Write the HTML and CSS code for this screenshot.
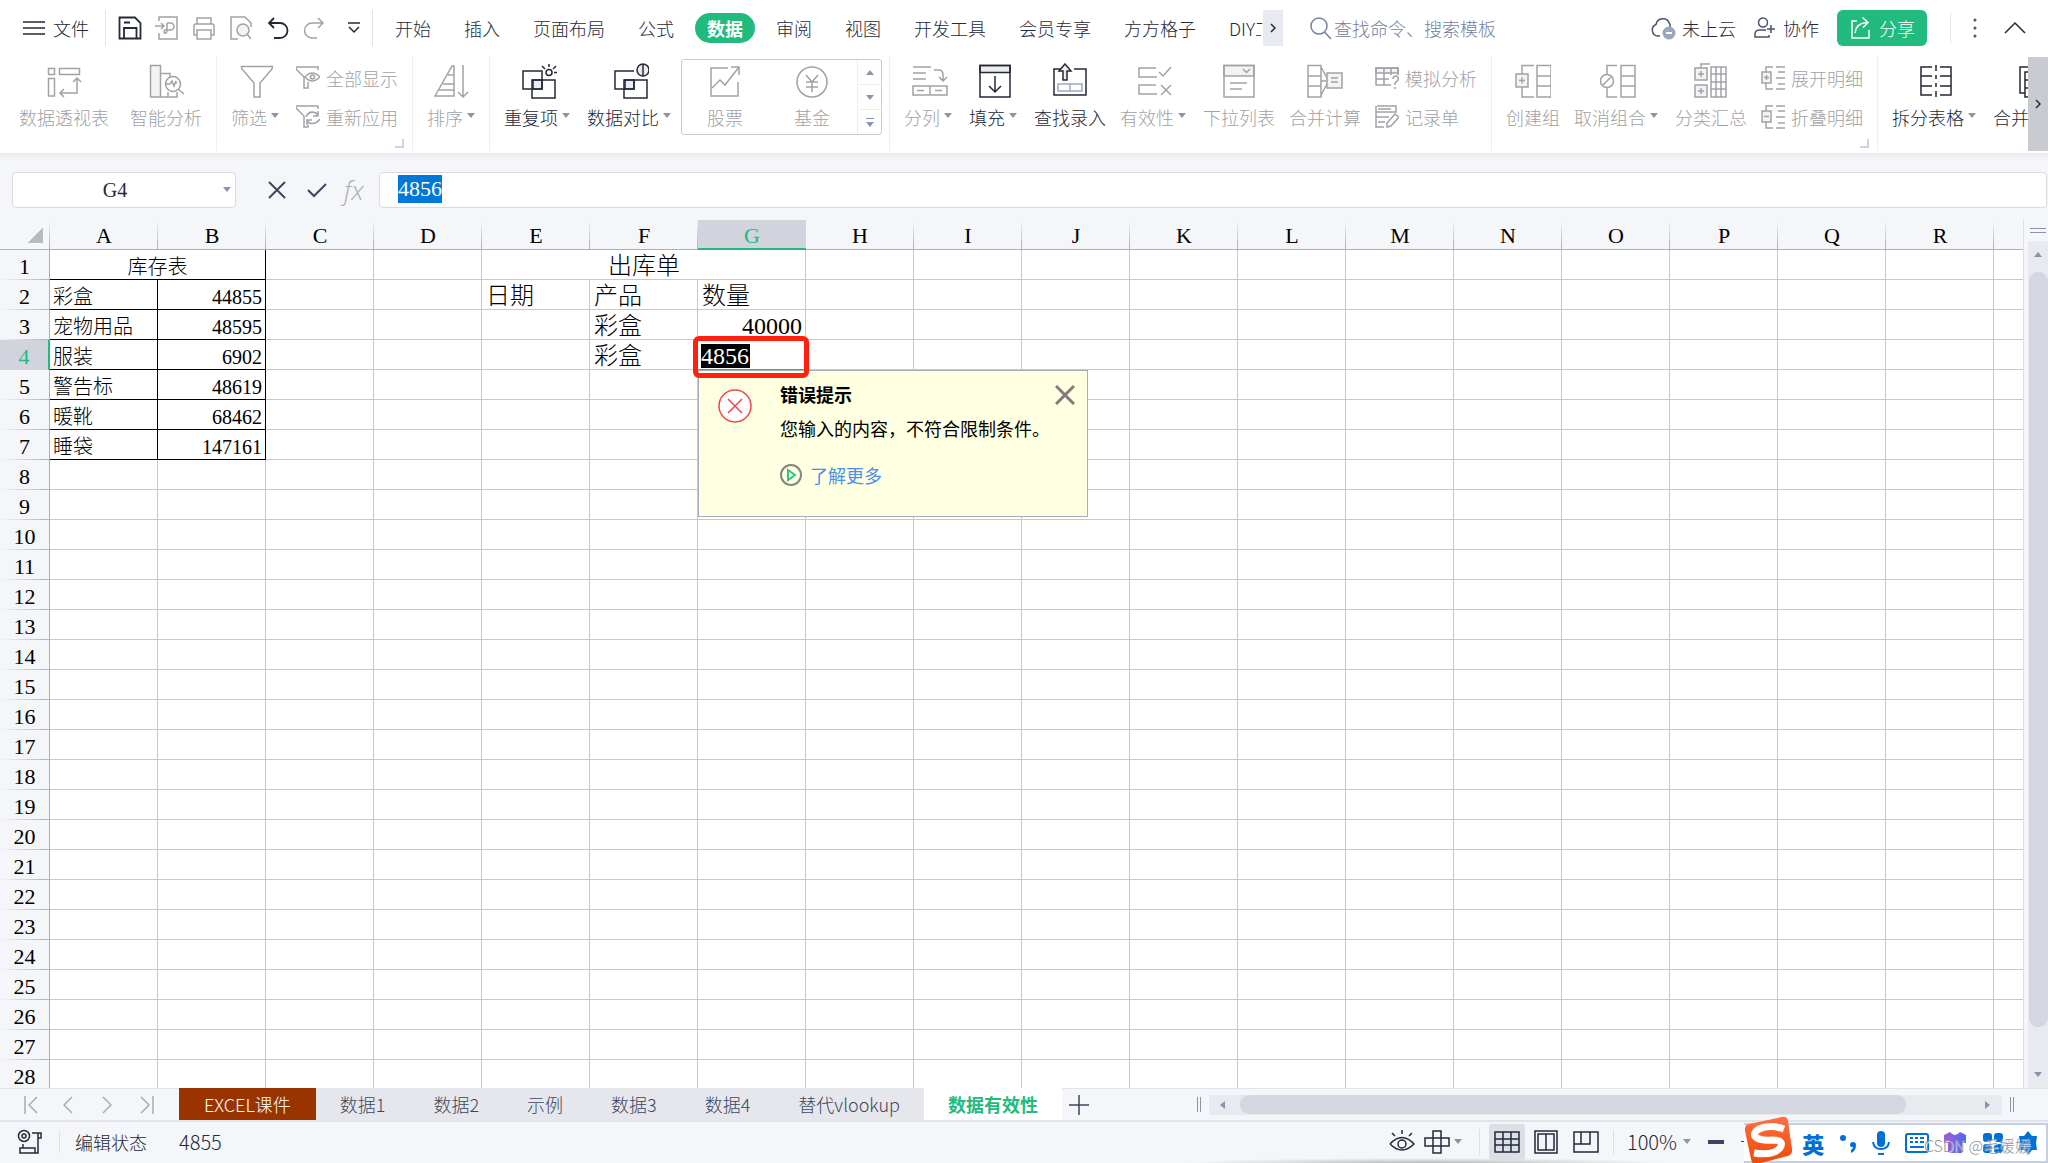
FILE: index.html
```html
<!DOCTYPE html>
<html lang="zh-CN">
<head>
<meta charset="utf-8">
<title>数据有效性</title>
<link rel="stylesheet" href="styles.css">
</head>
<body>
<header class="menubar">
  <button class="file-btn"><svg width="22" height="16" viewBox="0 0 22 16"><path d="M0 2H22M0 8H22M0 14H22"/></svg>文件</button>
  <div class="quick">
    <button aria-label="保存"><svg width="24" height="24" viewBox="0 0 24 24"><path class="heavy" d="M1.500 1.500H17L22.500 7V22.500H1.500ZM6 22V12H18.500V22M6 6.500H12"/></svg></button>
    <button aria-label="输出为PDF" class="off"><svg width="24" height="24" viewBox="0 0 24 24"><path d="M4 5V1H22V23H4V17M0 10H9M6 7L9 10L6 13M12 7H15.500A3.500 3.500 0 0 1 15.500 14H12V7M12 14C12 18 9 18 9 15.500C9 13.500 12 13.500 14 14"/></svg></button>
    <button aria-label="打印" class="off"><svg width="24" height="24" viewBox="0 0 24 24"><path d="M5 8V2H19V8M5 19H2V10Q2 8 4 8H20Q22 8 22 10V19H19M5 14H19V23H5Z"/></svg></button>
    <button aria-label="打印预览" class="off"><svg width="24" height="24" viewBox="0 0 24 24"><path d="M9 23H2V1H16L22 7V11M18 18L22 23"/><circle class="tint" cx="14" cy="14" r="6"/></svg></button>
    <button aria-label="撤销"><svg width="24" height="24" viewBox="0 0 24 24"><path class="heavy" d="M8 2L3 7L8 12M3 7H14A7.500 7.500 0 0 1 14 22H8"/></svg></button>
    <button aria-label="恢复" class="off"><svg width="24" height="24" viewBox="0 0 24 24"><path d="M15 2L20 7L15 12M20 7H9A7.500 7.500 0 0 0 9 22H14"/></svg></button>
    <button aria-label="自定义快速访问" class="narrow"><svg width="12" height="14" viewBox="0 0 12 14"><path d="M0 2H12M1 6L6 11L11 6"/></svg></button>
  </div>
  <nav class="tabs">
    <button>开始</button><button>插入</button><button>页面布局</button><button>公式</button><button class="on">数据</button><button>审阅</button><button>视图</button><button>开发工具</button><button>会员专享</button><button>方方格子</button><button class="cut">DIY工具箱</button>
  </nav>
  <button class="tab-more" aria-label="更多选项卡"><svg width="6" height="10" viewBox="0 0 6 10"><path d="M1 1L5 5L1 9"/></svg></button>
  <label class="search"><svg width="22" height="24" viewBox="0 0 22 24"><circle cx="9" cy="10" r="8"/><path d="M14.500 16L21 23"/></svg><input type="text" placeholder="查找命令、搜索模板"></label>
  <div class="account">
    <button><svg width="26" height="24" viewBox="0 0 26 24"><path d="M9 20H7A6 6 0 0 1 5 8.500A7 7 0 0 1 18.500 7.500Q19.500 9 19 11"/><circle class="badge" cx="18" cy="17" r="6.500"/><path class="white" d="M15 17H21"/></svg>未上云</button>
    <button class="collab"><svg width="22" height="22" viewBox="0 0 22 22"><circle cx="9" cy="5.500" r="4.500"/><path d="M12 13H6Q1 13 1 17V20H15V18M17 8V16M13 12H21"/></svg>协作</button>
    <button class="share"><svg width="24" height="24" viewBox="0 0 24 24"><path d="M8 5H3V22H20V14M6 17Q7 7 18 6.500M13.500 1.500L19 6.500L14 11.500"/></svg>分享</button>
  </div>
  <div class="window-tools">
    <button aria-label="更多"><svg width="4" height="20" viewBox="0 0 4 20"><g class="dots"><circle cx="2" cy="2" r="1.500"/><circle cx="2" cy="10" r="1.500"/><circle cx="2" cy="18" r="1.500"/></g></svg></button>
    <button aria-label="收起功能区"><svg width="22" height="14" viewBox="0 0 22 14"><path d="M1 12L11 2L21 12"/></svg></button>
  </div>
</header>

<section class="ribbon">
  <div class="group first">
    <button class="big off"><svg viewBox="0 0 36 36"><path d="M2.500 5.500H8.500V11.500H2.500ZM13.500 5.500H33.500V11.500H13.500ZM2.500 15.500H8.500V33H2.500ZM14 30H31V15M18 26L14 30L18 34M27 19L31 15L35 19"/></svg><span>数据透视表</span></button>
    <button class="big off"><svg viewBox="0 0 36 36"><path class="tint" d="M2.500 2.500H12.500V34H2.500Z"/><path d="M12.500 10.500H22V15M12.500 34H29V29M20 34V29M30 26L36 31M18 21H22L24 18L26 23L28 18V21"/><circle cx="25" cy="21" r="7.500"/></svg><span>智能分析</span></button>
  </div>
  <div class="group launch">
    <button class="big off"><svg viewBox="0 0 36 36"><path d="M2.500 3.500H33.500L33 6L21 20V34H15V20L3 6Z"/></svg><span>筛选<i class="caret"></i></span></button>
    <div class="stack">
      <button class="small off"><svg viewBox="0 0 24 24"><path d="M22 4V1H0V3L8 11V22H12V16M9 11Q16 3 24 11Q16 19 9 11"/><circle cx="16.500" cy="11" r="2"/></svg>全部显示</button>
      <button class="small off"><svg viewBox="0 0 24 24"><path d="M22 4V1H0V3L8 11V22H12V20M10 12Q13 5 20 8L22 11M22 6V11H17M24 14Q20 20 13 18L11 15M11 20V15H16"/></svg>重新应用</button>
    </div>
  </div>
  <div class="group">
    <button class="big off"><svg viewBox="0 0 36 36"><path d="M2 33L19 3H21V33ZM15 12H21M10 21H21M6 27H21M30 2V34M25 29L30 34L35 29"/></svg><span>排序<i class="caret"></i></span></button>
  </div>
  <div class="group">
    <button class="big"><svg viewBox="0 0 36 36"><path class="tint" d="M12 17H21V26H12Z"/><path d="M2 8H21V26H2ZM11 17H34V35H11Z"/><circle cx="28" cy="9.500" r="3"/><path d="M28 1V4M21 3L24 6M35 3L32 6M33 9.500H36"/></svg><span>重复项<i class="caret"></i></span></button>
    <button class="big"><svg viewBox="0 0 36 36"><path class="tint" d="M12 17H21V26H12Z"/><path d="M21 8H2V26H21V17M11 17H34V35H11Z"/><circle class="tint" cx="30" cy="7" r="6"/><path d="M30 1V13"/></svg><span>数据对比<i class="caret"></i></span></button>
    <div class="gallery">
      <button class="big off"><svg viewBox="0 0 36 36"><path d="M21 5H4V33H31V19M5 25L13 17L18 22L32 4M24 4H32V12"/></svg><span>股票</span></button>
      <button class="big off"><svg viewBox="0 0 36 36"><circle cx="18" cy="19" r="15"/><path d="M12 12L18 19L24 12M18 19V29M12 19H24M12 24H24"/></svg><span>基金</span></button>
      <div class="gallery-nav">
        <button aria-label="上一行"><i class="up"></i></button><button aria-label="下一行"><i class="caret"></i></button><button aria-label="展开" class="all"><i class="caret"></i></button>
      </div>
    </div>
  </div>
  <div class="group">
    <button class="big off"><svg viewBox="0 0 36 36"><path d="M1 4H19M1 10H14M1 16H14M22 7H27Q31 7 31 12V18M27 14L31 18L35 14M1 23H35V32H1ZM18 23V32M5 27.500H12M23 27.500H30"/></svg><span>分列<i class="caret"></i></span></button>
    <button class="big"><svg viewBox="0 0 36 36"><path class="tint" d="M3 2.500H33V9.500H3Z"/><path d="M3 2.500H33V34H3ZM18 13V29M12 23L18 29L24 23"/></svg><span>填充<i class="caret"></i></span></button>
    <button class="big"><svg viewBox="0 0 36 36"><path d="M10 6H2V32H34V6H22"/><path class="tint" d="M11 17V8H7L13 1L19 8H15V17Z"/><path class="pale" d="M6 21H30V28H6ZM18 21V28"/></svg><span>查找录入</span></button>
    <button class="big off"><svg viewBox="0 0 36 36"><path d="M19 5H2V14H20M19 22H2V31H20M22 9L26 13L34 4M24 22L34 32M34 22L24 32"/></svg><span>有效性<i class="caret"></i></span></button>
    <button class="big off"><svg viewBox="0 0 36 36"><path class="tint" d="M3 2.500H33V13H3Z"/><path d="M3 2.500H33V34H3ZM22 6L25.500 9.500L29 6M9 20H26M9 26H21"/></svg><span>下拉列表</span></button>
    <button class="big off"><svg viewBox="0 0 36 36"><path d="M1 2.500H14V34H1ZM1 13H14M1 23H14M14 4L20 15M14 18H20M14 32L20 21"/><path class="tint" d="M20 10H35V25H20Z"/><path d="M24 15H31M24 19H31"/></svg><span>合并计算</span></button>
    <div class="stack">
      <button class="small off"><svg viewBox="0 0 24 24"><path class="tint" d="M1 2H23V7H1Z"/><path d="M16 19H1V2H23V9M9 2V19M16 2V9M1 13H14M18 13Q18 10 21 10Q24 10 23 14L20 17V19M20 21V23"/></svg>模拟分析</button>
      <button class="small off"><svg viewBox="0 0 24 24"><path d="M2 1H21V7H1M1 1V12H14M3 4H16M1 12V22H9M3 17H10M12 22V18L20 9L24 12L16 21Z"/></svg>记录单</button>
    </div>
  </div>
  <div class="group launch">
    <button class="big off"><svg viewBox="0 0 36 36"><path d="M19 2.500H7V11M7 24V34H19M22 2.500H36V34H22ZM22 13H36M22 23H36"/><path class="tint" d="M1 11H13V24H1Z"/><path d="M4 17.500H10M7 14.500V20.500"/></svg><span>创建组</span></button>
    <button class="big off"><svg viewBox="0 0 36 36"><path d="M17 2.500H7V11M7 24V34H17M21 2.500H35V34H21ZM21 13H35M21 23H35M3 22L11 14"/><circle cx="7" cy="18" r="6.500"/></svg><span>取消组合<i class="caret"></i></span></button>
    <button class="big off"><svg viewBox="0 0 36 36"><path class="tint" d="M2 5H14V17H2ZM2 22H14V34H2Z"/><path d="M8 5V1H17M18 4H33V34H18ZM18 11H33M18 19H33M18 26H33M23 4V34M28 4V34M5 11H11M8 8V14M5 28H11M8 25V31"/></svg><span>分类汇总</span></button>
    <div class="stack">
      <button class="small off"><svg viewBox="0 0 24 24"><path class="tint" d="M1 6H10V17H1Z"/><path d="M12 1H5V6M5 17V23H12M3 11.500H8M5.500 9V14M15 1H24M17 6H24M15 12H24M17 18H24M15 23H24"/></svg>展开明细</button>
      <button class="small off"><svg viewBox="0 0 24 24"><path class="tint" d="M1 6H10V17H1Z"/><path d="M12 1H5V6M5 17V23H12M3 11.500H8M15 1H24M17 6H24M15 12H24M17 18H24M15 23H24"/></svg>折叠明细</button>
    </div>
  </div>
  <div class="group last">
    <button class="big"><svg viewBox="0 0 36 36"><path d="M14 4H3V32H14M3 13H14M3 23H14M22 4H33V32H22M33 13H22M33 23H22M18 2V8M18 12V16M18 20V24M18 28V34"/></svg><span>拆分表格<i class="caret"></i></span></button>
    <button class="big"><svg viewBox="0 0 36 36"><path d="M14 4H3V30H8M8 9H30V34H8ZM14 4V9M8 17H30M8 25H30"/></svg><span>合并表格<i class="caret"></i></span></button>
  </div>
  <button class="ribbon-more" aria-label="向右滚动"><svg width="6" height="10" viewBox="0 0 6 10"><path d="M1 1L5 5L1 9"/></svg></button>
</section>

<section class="formula">
  <div class="namebox"><input type="text" aria-label="名称框" value="G4"><i class="caret"></i></div>
  <div class="formula-tools">
    <button aria-label="取消"><svg width="18" height="18" viewBox="0 0 18 18"><path d="M1 1L17 17M17 1L1 17"/></svg></button>
    <button aria-label="确认"><svg width="20" height="16" viewBox="0 0 20 16"><path d="M1 8L7 14L19 2"/></svg></button>
    <button aria-label="插入函数" class="fx">fx</button>
  </div>
  <div class="editline" role="textbox" aria-label="编辑栏"><mark>4856</mark></div>
</section>

<main class="sheet">
  <div class="grid">
    <table>
      <thead><tr id="columns"><th class="corner"></th></tr></thead>
      <tbody id="rows"></tbody>
    </table>
  </div>
  <div class="vscroll">
    <div class="split"></div>
    <div class="track"><i class="up"></i><div class="thumb"></div><i class="caret"></i></div>
  </div>
</main>

<template id="editor">
  <span class="editing">4856</span>
  <div class="ring"></div>
  <div class="tip" role="alert">
    <svg width="34" height="34" viewBox="0 0 34 34"><circle cx="17" cy="17" r="16"/><path d="M10 10L24 24M24 10L10 24"/></svg>
    <div class="tip-body">
      <strong>错误提示</strong>
      <p>您输入的内容，不符合限制条件。</p>
      <a href="#"><svg width="22" height="22" viewBox="0 0 22 22"><circle cx="11" cy="11" r="10"/><path d="M8 6L15 11L8 16Z"/></svg>了解更多</a>
    </div>
    <button aria-label="关闭"><svg width="20" height="20" viewBox="0 0 20 20"><path d="M1 1L19 19M19 1L1 19"/></svg></button>
  </div>
</template>

<footer>
  <div class="sheetbar">
    <div class="sheet-nav">
      <button aria-label="第一个"><svg width="14" height="18" viewBox="0 0 14 18"><path d="M1 0V18M13 1L5 9L13 17"/></svg></button>
      <button aria-label="上一个"><svg width="10" height="18" viewBox="0 0 10 18"><path d="M9 1L1 9L9 17"/></svg></button>
      <button aria-label="下一个"><svg width="10" height="18" viewBox="0 0 10 18"><path d="M1 1L9 9L1 17"/></svg></button>
      <button aria-label="最后一个"><svg width="14" height="18" viewBox="0 0 14 18"><path d="M1 1L9 9L1 17M13 0V18"/></svg></button>
    </div>
    <div class="sheets">
      <button class="brown">EXCEL课件</button><button>数据1</button><button>数据2</button><button>示例</button><button>数据3</button><button>数据4</button><button>替代vlookup</button><button class="on">数据有效性</button>
    </div>
    <button class="add" aria-label="新建工作表"><svg width="20" height="20" viewBox="0 0 20 20"><path d="M0 10H20M10 0V20"/></svg></button>
    <div class="hscroll">
      <span class="grip"></span>
      <div class="track"><i class="left"></i><div class="thumb"></div><i class="right"></i></div>
      <span class="grip"></span>
    </div>
  </div>
  <div class="status">
    <button class="macro" aria-label="录制宏"><svg width="26" height="26" viewBox="0 0 26 26"><circle cx="7" cy="7" r="5.500"/><circle cx="7" cy="7" r="2"/><path d="M15 4H24V9H21V24H3V19H18V24M6 15V19M21 4V9"/></svg></button>
    <span class="mode">编辑状态</span><span class="value">4855</span>
    <div class="views">
      <button aria-label="护眼模式"><svg width="26" height="24" viewBox="0 0 26 24"><path d="M1 14Q13 1 25 14Q13 26 1 14M13 0V4M3 3L6 6M23 3L20 6"/><circle cx="13" cy="14" r="4"/></svg></button>
      <button class="cross" aria-label="阅读模式"><svg width="26" height="26" viewBox="0 0 26 26"><path d="M9 2H17V24H9ZM1 9H25V17H1Z"/></svg><i class="caret"></i></button>
      <button class="active" aria-label="普通视图"><svg width="26" height="22" viewBox="0 0 26 22"><path d="M1 1H25V21H1ZM1 8H25M1 14H25M9 1V21M17 1V21"/></svg></button>
      <button aria-label="页面布局"><svg width="24" height="24" viewBox="0 0 24 24"><path d="M1 1H23V23H1ZM4 4H20V20H4ZM12 4V20"/></svg></button>
      <button class="paged" aria-label="分页预览"><svg width="26" height="22" viewBox="0 0 26 22"><path d="M1 1H25V21H1ZM17 1V13H8V1M1 13H8"/></svg></button>
      <button class="zoom">100%<i class="caret"></i></button>
      <button aria-label="缩小"><svg width="16" height="4" viewBox="0 0 16 4"><path class="minus" d="M0 2H16"/></svg></button>
      <span class="slider"></span>
    </div>
    <div class="ime">
      <svg class="sogou" width="50" height="48" viewBox="0 0 50 48"><defs><linearGradient id="so" x1="0" y1="0" x2="0" y2="1"><stop offset="0" stop-color="#ff7040"/><stop offset="1" stop-color="#f04808"/></linearGradient></defs><path fill="url(#so)" d="M5 8L38 1Q43 0 44 5L48 33Q49 38 44 40L13 48Q8 49 7 43L1 15Q0 9 5 8Z"/><path fill="none" stroke="#fff" stroke-width="7" d="M40 13Q26 8 15 13Q7 18 13 22Q18 25 28 24Q41 24 36 32Q29 40 10 37"/></svg>
      <b>英</b>
      <svg width="18" height="22" viewBox="0 0 18 22"><circle cx="4" cy="6" r="3"/><path d="M11 13A3 3 0 1 1 17 13Q17 19 12 21V18Q14 17 14 15Q11 15 11 13"/></svg>
      <svg width="20" height="26" viewBox="0 0 20 26"><rect x="6" y="1" width="8" height="16" rx="4"/><path d="M1 12H3Q4 18 10 18Q16 18 17 12H19Q18 20 10 20Q2 20 1 12M7 23H13V25H7Z"/></svg>
      <svg width="24" height="20" viewBox="0 0 24 20"><path class="line" d="M3 1H21Q23 1 23 3V17Q23 19 21 19H3Q1 19 1 17V3Q1 1 3 1ZM5 5H8M10 5H13M15 5H19M5 9H8M10 9H13M15 9H19M5 14H19"/></svg>
      <svg width="24" height="24" viewBox="0 0 24 24"><defs><linearGradient id="shirt"><stop offset="0" stop-color="#a45cd8"/><stop offset="1" stop-color="#4a68f5"/></linearGradient></defs><path fill="url(#shirt)" d="M7 1Q12 7 17 1L23 4V12H19V22H5V12H1V4Z"/></svg>
      <svg width="22" height="22" viewBox="0 0 22 22"><rect x="1" y="1" width="9" height="9" rx="3"/><rect x="12" y="1" width="9" height="9" rx="3"/><rect x="1" y="12" width="9" height="9" rx="3"/><rect x="12" y="12" width="9" height="9" rx="3"/></svg>
      <svg width="20" height="24" viewBox="0 0 20 24"><path d="M10 0L14 5H19L18 12L19 19H14L10 24L6 19H1L2 12L1 5H6Z"/></svg>
      <span class="credit">CSDN @毛媛媛</span>
    </div>
  </div>
</footer>
<script src="script.js"></script>
</body>
</html>
```
FILE: styles.css
```css
* { box-sizing: border-box; }
body {
  margin: 0;
  height: 100vh;
  display: flex;
  flex-direction: column;
  overflow: hidden;
  background: #f5f6f9;
  color: #242938;
  font: 300 18px/24px "Noto Sans CJK SC", sans-serif;
  white-space: nowrap;
}
button {
  border: 0;
  padding: 0;
  margin: 0;
  background: none;
  color: inherit;
  font: inherit;
  display: flex;
  align-items: center;
}
input { border: 0; padding: 0; background: none; font: inherit; color: inherit; min-width: 0; }
svg { fill: none; stroke: currentColor; stroke-width: 1.5; flex: none; display: block; }
.heavy { stroke-width: 1.8; }
.tint { fill: #ececee; }
.off { color: #a0a2a6; }
.off .tint { fill: #f3f3f4; }
.pale { stroke: #a3a9bc; }
.caret, .up, .left, .right { display: inline-block; width: 0; height: 0; flex: none; border: 4px solid transparent; }
.caret { border-top: 5px solid #8a94ae; border-bottom: 0; }
.up { border-bottom: 5px solid #8a94ae; border-top: 0; }
.left { border-right: 5px solid #8a94ae; border-left: 0; }
.right { border-left: 5px solid #8a94ae; border-right: 0; }

.menubar { flex: none; height: 56px; display: flex; align-items: center; padding: 0 22px 0 23px; background: #fff; }
.file-btn { gap: 8px; padding-right: 16px; }
.quick { display: flex; align-items: center; height: 36px; padding: 0 0 0 12px; gap: 13px; border: solid #e2e4ea; border-width: 0 1px; }
.quick .narrow { padding: 0 12px 0 8px; }
.tabs { display: flex; gap: 9px; margin-left: 10px; overflow: hidden; flex: none; }
.tabs button { height: 30px; padding: 0 12px; border-radius: 15px; }
.tabs .on { background: #21bb7e; color: #fff; font-weight: 700; }
.tabs .cut { width: 46px; padding-right: 0; overflow: hidden; }
.tab-more { height: 36px; width: 20px; justify-content: center; background: #e7eaf0; flex: none; }
.search { display: flex; align-items: center; gap: 2px; margin-left: 27px; color: #7480a0; flex: 1; }
.search input { flex: 1; }
.search input::placeholder { color: #7480a0; opacity: 1; }
.account { display: flex; align-items: center; gap: 18px; }
.account button { gap: 5px; }
.account .collab { gap: 7px; }
.account svg { color: #4a526c; }
.badge { fill: #9ba6bf; stroke: none; }
.white { stroke: #fff; stroke-width: 2; }
.account .share { height: 36px; padding: 0 12px; gap: 6px; border-radius: 6px; background: #21bb7e; color: #fff; }
.account .share svg { color: #fff; }
.window-tools { display: flex; align-items: center; height: 30px; margin-left: 23px; padding-left: 22px; gap: 27px; border-left: 1px solid #e2e4ea; }
.dots { fill: #4a526c; stroke: none; }

.ribbon { flex: none; position: relative; z-index: 1; height: 98px; display: flex; overflow: hidden; background: #fff; border-bottom: 1px solid #e9eaec; padding-bottom: 2px; }
.group { position: relative; display: flex; align-items: flex-start; padding: 7px 7px 0; border-right: 1px solid #eceef2; flex: none; }
.group.first { padding-left: 12px; gap: 7px; }
.group.last { border: 0; }
.launch::after { content: ""; position: absolute; right: 8px; bottom: 3px; width: 7px; height: 7px; border: solid #ccd3e4; border-width: 0 2px 2px 0; }
.big { flex-direction: column; gap: 6px; padding: 0 7px; }
.big svg { width: 36px; height: 36px; }
.big span { display: flex; align-items: center; }
.big .caret { margin: 0 0 4px 4px; }
.big:not(:last-child) .caret { margin-right: 3px; }
.stack { display: flex; flex-direction: column; gap: 15px; padding-top: 3px; }
.small { gap: 6px; padding: 0 7px; }
.small svg { width: 24px; height: 24px; }
.gallery { display: flex; width: 201px; height: 76px; margin-top: -4px; padding: 3px 0 0 18px; border: 1px solid #c9cbd0; border-radius: 3px; }
.gallery .big + .big { margin-left: 37px; }
.gallery-nav { display: flex; flex-direction: column; width: 24px; margin: -3px 0 0 auto; border-left: 1px solid #eceef2; }
.gallery-nav button { flex: 1; justify-content: center; border-bottom: 1px solid #eceef2; }
.gallery-nav .all { flex-direction: column; gap: 3px; border: 0; }
.all::before { content: ""; width: 8px; height: 1px; background: #8a94ae; }
.ribbon-more { position: absolute; right: 0; top: 1px; bottom: 2px; width: 20px; justify-content: center; background: #c9cbd1; }

.formula { flex: none; height: 66px; display: flex; align-items: center; padding: 5px 1px 0 12px; background: linear-gradient(#e9ebee, #f5f6f9 6px); font-family: "Liberation Serif", "Noto Sans CJK SC", serif; font-size: 22px; }
.namebox { display: flex; align-items: center; width: 224px; height: 36px; padding-right: 4px; background: #fff; border: 1px solid #d8dae0; border-radius: 4px; }
.namebox input { flex: 1; padding-right: 6px; text-align: center; font-size: 20px; }
.formula-tools { display: flex; align-items: center; gap: 21px; margin-left: 32px; width: 111px; color: #3d4660; }
.formula-tools svg { stroke-width: 2; }
.fx { margin-left: -4px; color: #aaadb3; font: italic 300 26px/28px "Open Sans", sans-serif; }
.editline { flex: 1; height: 36px; padding: 2px 18px; background: #fff; border: 1px solid #d8dae0; border-radius: 4px; line-height: 28px; }
mark { background: #0078d7; color: #fff; display: inline-block; }

.sheet { flex: 1; min-height: 0; display: flex; }
.grid { flex: 1; min-width: 0; overflow: hidden; background: #fff; border-right: 1px solid #dcdfe6; }
table { width: 2102px; table-layout: fixed; border-spacing: 0; font-family: "Liberation Serif", "Noto Sans CJK SC", serif; color: #000; }
th, td { height: 30px; padding: 0 3px 0 4px; border: solid #c3c8d8; border-width: 0 1px 1px 0; line-height: 24px; font-weight: 300; }
th { width: 108px; padding: 4px 0 0; font-size: 22px; background: #f5f6f9; }
thead th { padding-top: 3px; border-right: 0; border-bottom-color: #a9b0c6; background: linear-gradient(#f5f6f9, #a9b0c6) right / 1px 100% no-repeat #f5f6f9; }
th.corner { width: 50px; background: linear-gradient(135deg, transparent 50%, #b9babd 50%) 28px 8px / 15px 15px no-repeat, linear-gradient(#f5f6f9, #a9b0c6) right / 1px 100% no-repeat #f5f6f9; }
tbody th { border-right-color: #a9b0c6; border-bottom: 0; background: linear-gradient(90deg, #f5f6f9, #a9b0c6) bottom / 100% 1px no-repeat #f5f6f9; }
thead th.sel { background: #d1d4dc; border-bottom: 2px solid #21bb7e; color: #21bb7e; }
tbody th.sel { background: #d1d4dc; border-right: 2px solid #21bb7e; color: #21bb7e; }
.stock { padding: 5px 3px 0; font-size: 20px; border-color: #000; }
.out { font-size: 24px; padding-top: 3px; }
.num { text-align: right; }
.mid { text-align: center; }
.edit { position: relative; border-bottom: 1px solid #21bb7e; padding-left: 3px; }
.editing { display: inline-block; height: 24px; background: #000; color: #fff; border-right: 1px solid #000; vertical-align: top; }
.ring { position: absolute; z-index: 2; left: -5px; top: -4px; width: 116px; height: 42px; border: 5px solid #ff2010; border-radius: 6px; }
.tip { position: absolute; z-index: 1; left: 0; top: 30px; width: 390px; height: 147px; display: flex; align-items: flex-start; padding: 11px 12px 0 19px; background: #ffffe1; border: 1px solid #a9adb8; font: 400 18px/24px "Noto Sans CJK SC", sans-serif; }
.tip > svg { margin-top: 7px; color: #f0454b; }
.tip circle { fill: #fff; }
.tip-body { margin-left: 28px; }
.tip strong { font-weight: 700; }
.tip-body p { margin: 10px 0 23px; }
.tip a { display: flex; align-items: center; gap: 8px; color: #4a8ff0; text-decoration: none; }
.tip a circle { fill: none; stroke: #85857c; stroke-width: 2; }
.tip a path { stroke: #2fc286; stroke-width: 2; }
.tip button { margin: 3px 0 0 auto; color: #86787a; }
.tip button svg { stroke-width: 3; }

.vscroll { flex: none; width: 24px; padding-left: 4px; display: flex; flex-direction: column; }
.split { height: 5px; margin: 8px 2px; border: solid #8a94ae; border-width: 1px 0; }
.vscroll .track { flex: 1; display: flex; flex-direction: column; align-items: center; padding: 11px 0; background: #e9eaef; }
.vscroll .thumb { flex: 0 1 755px; width: 19px; margin: 15px 0 auto; border-radius: 9px; background: #d4d7e0; }

.sheetbar { height: 34px; display: flex; align-items: stretch; border: solid #e1e3e9; border-width: 1px 0 2px; }
.sheet-nav { display: flex; align-items: center; width: 179px; padding-left: 24px; color: #a9acb3; }
.sheet-nav button { width: 39px; }
.sheets { display: flex; margin-top: -1px; background: #e6e7ec; color: #3d4660; }
.sheets button { padding: 0 24px; }
.sheets .brown { padding: 0 25px; background: #993300; color: #fff; }
.sheets .on { background: #fff; color: #21bb7e; font-weight: 700; }
.add { padding: 0 9px 0 7px; color: #3d4660; }
.hscroll { flex: 1; display: flex; align-items: center; justify-content: flex-end; gap: 8px; margin: 0 34px 0 99px; }
.hscroll .track { flex: 1; height: 20px; display: flex; align-items: center; padding: 0 12px 0 11px; background: #e9eaef; }
.hscroll .thumb { flex: 0 1 666px; height: 19px; margin: 0 auto 0 15px; border-radius: 9px; background: #d4d7e0; }
.grip { width: 4px; height: 15px; border: solid #8a94ae; border-width: 0 1px; }
.status { height: 41px; display: flex; align-items: center; padding-bottom: 2px; color: #242938; background: radial-gradient(240px 5px at 1425px 41px, #b9babb, #f5f6f9); }
.macro { height: 22px; width: 60px; padding-left: 17px; border-right: 1px solid #dcdfe6; }
.mode { margin-left: 15px; }
.value { margin-left: 32px; font-size: 20px; }
.views { display: flex; align-items: center; margin-left: auto; gap: 9px; }
.cross { gap: 4px; padding-right: 17px; border-right: 1px solid #dcdfe6; }
.views .active { width: 36px; height: 36px; justify-content: center; background: #dbdfe6; border-radius: 3px; }
.views .zoom { margin: 0 8px 0 5px; gap: 6px; padding-left: 13px; border-left: 1px solid #dcdfe6; font-size: 20px; }
.views .paged { margin-left: 6px; }
.minus { stroke: #3d4660; stroke-width: 4; }
.slider { width: 3px; height: 1px; margin-left: 8px; background: #3d4660; }
.ime { position: relative; display: flex; align-items: center; justify-content: space-between; width: 304px; height: 40px; margin-top: 2px; padding-right: 8px; background: #fff; border: 2px solid #c3d0e4; border-left: 0; color: #0070d8; }
.ime svg { fill: currentColor; stroke: none; }
.ime .line { fill: none; stroke: currentColor; stroke-width: 2; }
.ime .sogou { margin: -5px -6px 0 0; }
.ime b { font-size: 22px; font-weight: 900; }
.credit { position: absolute; right: 15px; top: 8px; color: #8f939b; text-shadow: 1px 1px 1px #fff; font-size: 16px; }
```
FILE: script.js
```js
const COLUMNS = 'ABCDEFGHIJKLMNOPQRS';
const ROW_COUNT = 28;
const selected = { column: 'G', row: 4 };

const cells = {
  A1: { text: '库存表', cls: 'stock mid', span: 2 },
  E1: { text: '出库单', cls: 'out mid', span: 3 },
  E2: { text: '日期', cls: 'out' },
  F2: { text: '产品', cls: 'out' },
  G2: { text: '数量', cls: 'out' },
  F3: { text: '彩盒', cls: 'out' },
  G3: { text: '40000', cls: 'out num' },
  F4: { text: '彩盒', cls: 'out' },
  G4: { text: '', cls: 'out edit' }
};

[['彩盒', 44855], ['宠物用品', 48595], ['服装', 6902], ['警告标', 48619], ['暖靴', 68462], ['睡袋', 147161]]
  .forEach(([name, count], i) => {
    cells['A' + (i + 2)] = { text: name, cls: 'stock' };
    cells['B' + (i + 2)] = { text: count, cls: 'stock num' };
  });

const headRow = document.getElementById('columns');
for (const letter of COLUMNS) {
  const th = document.createElement('th');
  if (letter !== 'S') th.textContent = letter;
  if (letter === selected.column) th.className = 'sel';
  headRow.append(th);
}

const body = document.getElementById('rows');
for (let row = 1; row <= ROW_COUNT; row++) {
  const tr = body.insertRow();
  const th = document.createElement('th');
  th.textContent = row;
  if (row === selected.row) th.className = 'sel';
  tr.append(th);
  for (let c = 0; c < COLUMNS.length; c++) {
    const key = COLUMNS[c] + row;
    const cell = cells[key];
    const td = tr.insertCell();
    if (!cell) continue;
    td.textContent = cell.text;
    td.className = cell.cls;
    if (cell.span) {
      td.colSpan = cell.span;
      c += cell.span - 1;
    }
    if (key === selected.column + selected.row) {
      td.append(document.getElementById('editor').content.cloneNode(true));
    }
  }
}
```
